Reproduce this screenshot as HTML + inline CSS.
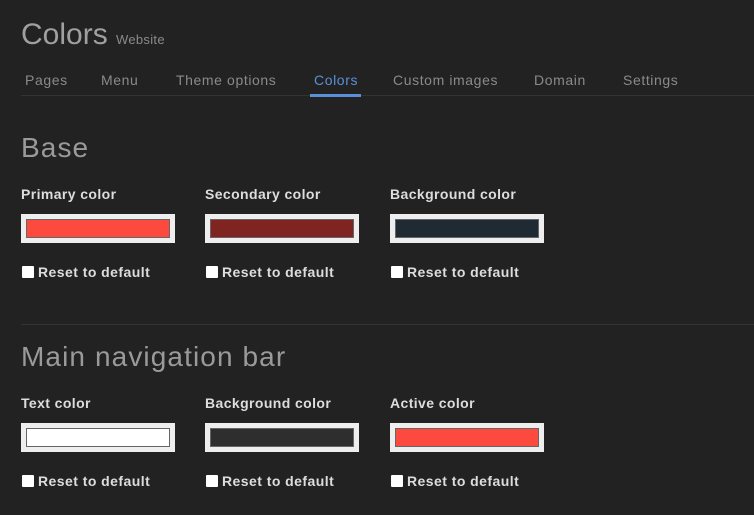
<!DOCTYPE html>
<html><head><style>
body{margin:0;width:754px;height:515px;background:#222;font-family:"Liberation Sans",sans-serif;position:relative;overflow:hidden}
.a{position:absolute;white-space:nowrap}
.tab{position:absolute;top:72px;font-size:14px;color:#8a8a8a;letter-spacing:0.6px}
.lbl{position:absolute;font-size:14px;font-weight:bold;color:#ddd;letter-spacing:0.4px}
.sw{position:absolute;width:144px;height:19px;border:5px solid #eee;background-clip:padding-box}
.sw i{position:absolute;left:0;top:0;right:0;bottom:0;border:1px solid #666}
.cb{position:absolute;font-size:14px;font-weight:bold;color:#ddd;letter-spacing:0.45px}
.cb b{display:inline-block;width:12px;height:12px;background:#fff;border-radius:1px;margin-right:4px;vertical-align:-1px}
h2{position:absolute;margin:0;font-weight:normal;font-size:28px;color:#9a9a9a;letter-spacing:1.1px;white-space:nowrap}
</style></head><body>
<div class="a" style="left:21px;top:18px;font-size:30px;color:#a0a0a0">Colors <span style="font-size:13px;color:#8a8a8a;letter-spacing:0.3px">Website</span></div>
<div class="tab" style="left:25px">Pages</div>
<div class="tab" style="left:101px">Menu</div>
<div class="tab" style="left:176px">Theme options</div>
<div class="tab" style="left:314px;color:#5b8fd9">Colors</div>
<div class="tab" style="left:393px">Custom images</div>
<div class="tab" style="left:534px">Domain</div>
<div class="tab" style="left:623px">Settings</div>
<div class="a" style="left:21px;top:95px;width:733px;height:1px;background:#333"></div>
<div class="a" style="left:310px;top:94px;width:51px;height:3px;background:#5b8fd9"></div>
<h2 style="left:21px;top:132px">Base</h2>
<div class="lbl" style="left:21px;top:186px">Primary color</div>
<div class="lbl" style="left:205px;top:186px">Secondary color</div>
<div class="lbl" style="left:390px;top:186px">Background color</div>
<div class="sw" style="left:21px;top:214px;background:#fc4a3e"><i></i></div>
<div class="sw" style="left:205px;top:214px;background:#7f2421"><i></i></div>
<div class="sw" style="left:390px;top:214px;background:#1f2a33"><i></i></div>
<div class="cb" style="left:22px;top:264px"><b></b>Reset to default</div>
<div class="cb" style="left:206px;top:264px"><b></b>Reset to default</div>
<div class="cb" style="left:391px;top:264px"><b></b>Reset to default</div>
<div class="a" style="left:21px;top:324px;width:733px;height:1px;background:#333"></div>
<h2 style="left:21px;top:341px">Main navigation bar</h2>
<div class="lbl" style="left:21px;top:395px">Text color</div>
<div class="lbl" style="left:205px;top:395px">Background color</div>
<div class="lbl" style="left:390px;top:395px">Active color</div>
<div class="sw" style="left:21px;top:423px;background:#fff"><i></i></div>
<div class="sw" style="left:205px;top:423px;background:#2e2e2e"><i></i></div>
<div class="sw" style="left:390px;top:423px;background:#fc4a3e"><i></i></div>
<div class="cb" style="left:22px;top:473px"><b></b>Reset to default</div>
<div class="cb" style="left:206px;top:473px"><b></b>Reset to default</div>
<div class="cb" style="left:391px;top:473px"><b></b>Reset to default</div>
</body></html>
